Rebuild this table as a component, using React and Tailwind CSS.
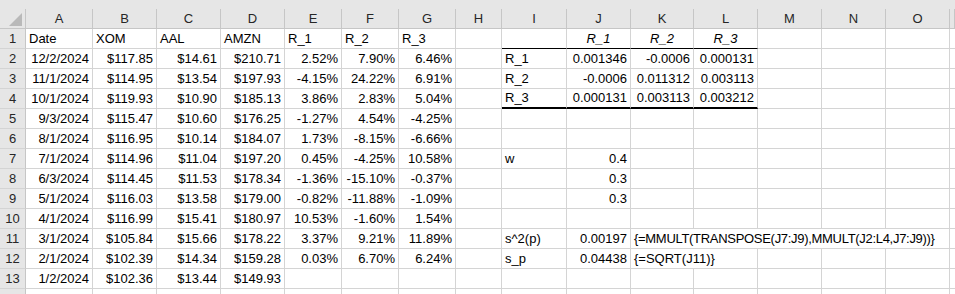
import React from 'react';

const cols = ['A', 'B', 'C', 'D', 'E', 'F', 'G', 'H', 'I', 'J', 'K', 'L', 'M', 'N', 'O', ''];

// each row: 15 cells A..O, values are [text, align, span] or null
const rows = [
  [['Date', 'l'], ['XOM', 'l'], ['AAL', 'l'], ['AMZN', 'l'], ['R_1', 'l'], ['R_2', 'l'], ['R_3', 'l'], null, null, ['R_1', 'c'], ['R_2', 'c'], ['R_3', 'c'], null, null, null],
  [['12/2/2024'], ['$117.85'], ['$14.61'], ['$210.71'], ['2.52%'], ['7.90%'], ['6.46%'], null, ['R_1', 'l'], ['0.001346'], ['-0.0006'], ['0.000131'], null, null, null],
  [['11/1/2024'], ['$114.95'], ['$13.54'], ['$197.93'], ['-4.15%'], ['24.22%'], ['6.91%'], null, ['R_2', 'l'], ['-0.0006'], ['0.011312'], ['0.003113'], null, null, null],
  [['10/1/2024'], ['$119.93'], ['$10.90'], ['$185.13'], ['3.86%'], ['2.83%'], ['5.04%'], null, ['R_3', 'l'], ['0.000131'], ['0.003113'], ['0.003212'], null, null, null],
  [['9/3/2024'], ['$115.47'], ['$10.60'], ['$176.25'], ['-1.27%'], ['4.54%'], ['-4.25%'], null, null, null, null, null, null, null, null],
  [['8/1/2024'], ['$116.95'], ['$10.14'], ['$184.07'], ['1.73%'], ['-8.15%'], ['-6.66%'], null, null, null, null, null, null, null, null],
  [['7/1/2024'], ['$114.96'], ['$11.04'], ['$197.20'], ['0.45%'], ['-4.25%'], ['10.58%'], null, ['w', 'l'], ['0.4'], null, null, null, null, null],
  [['6/3/2024'], ['$114.45'], ['$11.53'], ['$178.34'], ['-1.36%'], ['-15.10%'], ['-0.37%'], null, null, ['0.3'], null, null, null, null, null],
  [['5/1/2024'], ['$116.03'], ['$13.58'], ['$179.00'], ['-0.82%'], ['-11.88%'], ['-1.09%'], null, null, ['0.3'], null, null, null, null, null],
  [['4/1/2024'], ['$116.99'], ['$15.41'], ['$180.97'], ['10.53%'], ['-1.60%'], ['1.54%'], null, null, null, null, null, null, null, null],
  [['3/1/2024'], ['$105.84'], ['$15.66'], ['$178.22'], ['3.37%'], ['9.21%'], ['11.89%'], null, ['s^2(p)', 'l'], ['0.00197'], ['{=MMULT(TRANSPOSE(J7:J9),MMULT(J2:L4,J7:J9))}', 'l', 5], null, null, null, null],
  [['2/1/2024'], ['$102.39'], ['$14.34'], ['$159.28'], ['0.03%'], ['6.70%'], ['6.24%'], null, ['s_p', 'l'], ['0.04438'], ['{=SQRT(J11)}', 'l', 2], null, null, null, null],
  [['1/2/2024'], ['$102.36'], ['$13.44'], ['$149.93'], null, null, null, null, null, null, null, null, null, null, null],
  new Array(15).fill(null),
];

const gridCols =
  'grid grid-cols-[26px_67px_64px_64px_64px_57px_57px_57px_46px_65px_64px_63px_64px_64px_64px_64px_5px]';

function Cell({ r, c, v }) {
  const text = v ? v[0] : '';
  const align = v ? v[1] || 'r' : 'r';
  const span = v && v[2] ? v[2] : 1;
  // bordered covariance block I1:L4
  const inBox = c >= 8 && c <= 11;
  let bottom = 'border-b border-b-[#d4d4d4]';
  if (inBox && r === 0) bottom = 'border-b border-b-black';
  if (inBox && r === 3) bottom = 'border-b-2 border-b-black';
  const spanCls = span === 5 ? 'col-span-5 tracking-[-0.3px]' : span === 2 ? 'col-span-2' : '';
  const alignCls =
    align === 'l' ? 'justify-start pl-[3px]' : align === 'c' ? 'justify-center italic' : 'justify-end pr-[3px]';
  return (
    <div
      className={`h-[20px] flex items-end pb-[1px] whitespace-nowrap overflow-visible border-r border-r-[#d4d4d4] ${bottom} ${spanCls} ${alignCls}`}
    >
      <span className="leading-[16px]">{text}</span>
    </div>
  );
}

export default function App() {
  return (
    <div className="w-[955px] h-[294px] overflow-hidden bg-white text-[13px] text-black font-['Liberation_Sans',Arial,sans-serif]">
      <div className="h-[9px] bg-[#e6e6e6]" />
      <div className={gridCols}>
        {/* corner */}
        <div className="h-[20px] bg-[#e6e6e6] border-r border-r-[#c6c6c6] border-b border-b-[#c6c6c6] relative">
          <svg className="absolute left-[9px] top-[4px]" width="13" height="13" viewBox="0 0 13 13">
            <polygon points="13,0 13,13 0,13" fill="#b9b9b9" />
          </svg>
        </div>
        {cols.map((c, i) => (
          <div
            key={i}
            className="h-[20px] bg-[#e6e6e6] border-r border-r-[#c6c6c6] border-b border-b-[#c6c6c6] flex items-center justify-center text-[#262626] leading-none"
          >
            {c}
          </div>
        ))}
        {rows.map((row, r) => (
          <React.Fragment key={r}>
            <div className="h-[20px] bg-[#e6e6e6] border-r border-r-[#c6c6c6] border-b border-b-[#d4d4d4] flex items-center justify-center text-[#262626]">
              {r < 13 ? r + 1 : ''}
            </div>
            {row.map((v, c) => {
              // skip cells covered by a spanning neighbour
              if (r === 10 && c >= 11 && c <= 14) return null;
              if (r === 11 && c === 11) return null;
              return <Cell key={c} r={r} c={c} v={v} />;
            })}
            <div className="h-[20px] border-b border-b-[#d4d4d4]" />
          </React.Fragment>
        ))}
      </div>
    </div>
  );
}
